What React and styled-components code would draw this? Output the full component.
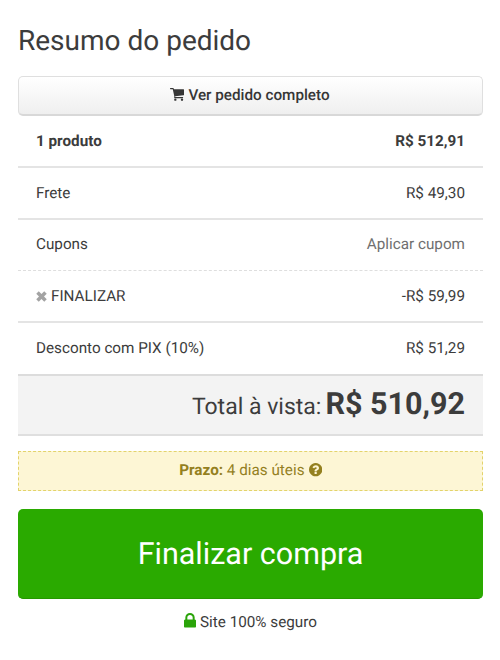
import React from 'react';
import styled, { createGlobalStyle } from 'styled-components';

const GlobalStyle = createGlobalStyle`
  *, *::before, *::after { box-sizing: border-box; }
  body {
    margin: 0;
    background: #fff;
    color: #3c3c3c;
    font-family: Roboto, "Liberation Sans", sans-serif;
    font-size: 15.25px;
    text-rendering: geometricPrecision;
  }
`;

const Page = styled.main`
  display: flex;
  flex-direction: column;
  height: 660px;
  padding: 21px 17px 0 18px;
  overflow: hidden;
`;

const Title = styled.h1`
  height: 40px;
  margin: 0 0 15px;
  font-size: 28px;
  font-weight: 400;
  line-height: 40px;
  white-space: nowrap;
`;

const OrderButton = styled.button`
  display: flex;
  align-items: center;
  justify-content: center;
  gap: 4px;
  flex: none;
  height: 40px;
  padding: 0 1px 2px 0;
  border: 1px solid #dfdfdf;
  border-bottom: 2px solid #d8d8d8;
  border-radius: 5px;
  background: linear-gradient(#fff, #efefef);
  color: #363636;
  font: 500 15.25px Roboto, sans-serif;
  text-rendering: inherit;
`;

const Rows = styled.section`
  display: flex;
  flex-direction: column;
`;

const Row = styled.div`
  display: flex;
  align-items: center;
  justify-content: space-between;
  height: ${(p) => p.$height}px;
  padding: 0 18px ${(p) => p.$lift || 0}px;
  border-bottom: ${(p) => p.$line || '2px solid #e4e4e4'};
  font-weight: ${(p) => (p.$bold ? 700 : 400)};
`;

const Label = styled.span`
  display: flex;
  align-items: center;
  gap: 4px;
`;

const CouponLink = styled.a`
  color: #707070;
`;

const Total = styled.div`
  display: flex;
  align-items: baseline;
  justify-content: flex-end;
  gap: 4px;
  height: 60px;
  padding: 0 18px;
  border-bottom: 2px solid #dfdfdf;
  background: #f3f3f3;
  line-height: 58px;
  font-size: 23px;
`;

const TotalValue = styled.strong`
  font-size: 30.5px;
  font-weight: 700;
`;

const Deadline = styled.div`
  display: flex;
  align-items: center;
  justify-content: center;
  gap: 4px;
  height: 40px;
  margin-top: 15px;
  padding-bottom: 2px;
  border: 1px dashed #e3d36b;
  background: #fdf6d5;
  color: #94801f;
`;

const Checkout = styled.button`
  flex: none;
  height: 90px;
  margin-top: 18px;
  padding: 1px 0 0;
  border: 0;
  border-bottom: 1px solid #259800;
  border-radius: 5px;
  background: #2aaa00;
  color: #fff;
  font: 400 30.5px Roboto, sans-serif;
  text-rendering: inherit;
`;

const Secure = styled.footer`
  display: flex;
  align-items: center;
  justify-content: center;
  gap: 4px;
  height: 20px;
  margin-top: 13px;
`;

const Glyph = styled.svg`
  display: block;
  flex: none;
  width: ${(p) => p.$w}px;
  height: ${(p) => p.$h}px;
  margin-top: ${(p) => p.$shift || 0}px;
  color: ${(p) => p.$color || 'inherit'};
  fill: currentColor;
`;

const CartIcon = () => (
  <Glyph $w={14} $h={13} viewBox="0 0 42 39">
    <path d="M1.500 0H9q2 0 2.500 2l.5 2H41q1 0 1 1v15q0 1.500-1.500 1.700L15.500 24.500l.5 2.500H38q1.500 0 1.500 1.700T38 30.500H13.500q-1.500 0-1-2l.7-2L8.300 3.500H1.500Q0 3.500 0 1.700T1.500 0z" />
    <circle cx="16" cy="35" r="3.500" />
    <circle cx="36" cy="35" r="3.500" />
  </Glyph>
);

const RemoveIcon = () => (
  <Glyph $w={11} $h={11} $color="#a3a3a3" viewBox="0 0 22 22">
    <path d="M5.500.5 11 6l5.500-5.500 5 5L16 11l5.500 5.500-5 5L11 16l-5.500 5.500-5-5L6 11 .5 5.500z" />
  </Glyph>
);

const HelpIcon = () => (
  <Glyph $w={13.3} $h={13.3} viewBox="128 128 1536 1536">
    <path d="M1024 1376v-192q0-14-9-23t-23-9h-192q-14 0-23 9t-9 23v192q0 14 9 23t23 9h192q14 0 23-9t9-23zm256-672q0-88-55.500-163t-138.500-116-170-41q-243 0-371 213-15 24 8 42l132 100q7 6 19 6 16 0 25-12 53-68 86-92 34-24 86-24 48 0 85.500 26t37.500 59q0 38-20 61t-68 45q-63 28-115.500 86.500t-52.500 125.500v36q0 14 9 23t23 9h192q14 0 23-9t9-23q0-19 21.500-49.500t54.500-49.500q32-18 49-28.500t46-35 44.500-48 28-60.500 12.500-81zm384 192q0 209-103 385.500t-279.500 279.500-385.500 103-385.500-103-279.500-279.500-103-385.500 103-385.500 279.500-279.500 385.500-103 385.500 103 279.500 279.500 103 385.500z" />
  </Glyph>
);

const LockIcon = () => (
  <Glyph $w={12} $h={14.5} $shift={-3} $color="#2aa40a" viewBox="320 128 1152 1408" preserveAspectRatio="none">
    <path d="M640 768h512v-192q0-106-75-181t-181-75-181 75-75 181v192zm832 96v576q0 40-28 68t-68 28h-960q-40 0-68-28t-28-68v-576q0-40 28-68t68-28h32v-192q0-184 132-316t316-132 316 132 132 316v192h32q40 0 68 28t28 68z" />
  </Glyph>
);

export default function App() {
  return (
    <>
      <GlobalStyle />
      <Page>
        <Title>Resumo do pedido</Title>
        <OrderButton type="button">
          <CartIcon />
          <span>Ver pedido completo</span>
        </OrderButton>
        <Rows>
          <Row $height={52} $bold>
            <span>1 produto</span>
            <span>R$ 512,91</span>
          </Row>
          <Row $height={52}>
            <span>Frete</span>
            <span>R$ 49,30</span>
          </Row>
          <Row $height={51} $lift={2} $line="1px dashed #dedede">
            <span>Cupons</span>
            <CouponLink>Aplicar cupom</CouponLink>
          </Row>
          <Row $height={52}>
            <Label>
              <RemoveIcon />
              FINALIZAR
            </Label>
            <span>-R$ 59,99</span>
          </Row>
          <Row $height={53} $lift={2} $line="2px solid #dcdcdc">
            <span>Desconto com PIX (10%)</span>
            <span>R$ 51,29</span>
          </Row>
          <Total>
            <span>Total à vista:</span>
            <TotalValue>R$ 510,92</TotalValue>
          </Total>
        </Rows>
        <Deadline>
          <span><b>Prazo:</b> 4 dias úteis</span>
          <HelpIcon />
        </Deadline>
        <Checkout type="button">Finalizar compra</Checkout>
        <Secure>
          <LockIcon />
          <span>Site 100% seguro</span>
        </Secure>
      </Page>
    </>
  );
}
